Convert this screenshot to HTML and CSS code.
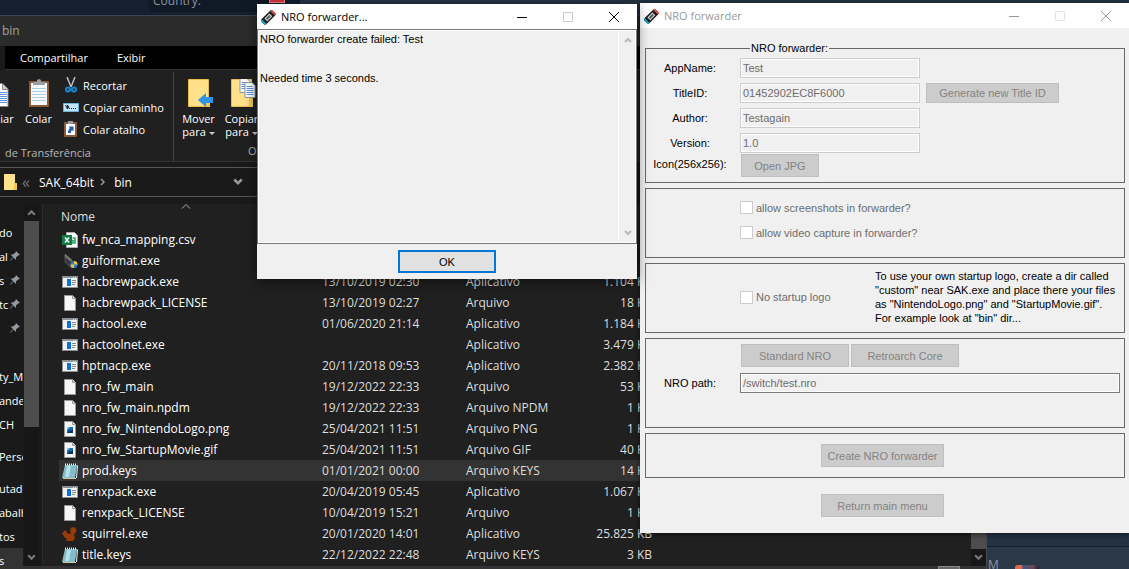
FILE: index.html
```html
<!DOCTYPE html>
<html lang="pt-BR">
<head>
    <meta charset="UTF-8">
    <meta name="viewport" content="width=device-width, initial-scale=1.0">
    <title>NRO forwarder</title>
    <link rel="stylesheet" href="styles.css">
</head>
<body>
    <!-- shared icons -->
    <svg class="sprite" aria-hidden="true">
        <symbol id="exe" viewBox="0 0 16 16">
            <path fill="#8b9197" d="M0 2h16v12H0z"/>
            <path fill="#f2f2f2" d="M1 4h14v9H1z"/>
            <path fill="#d5d9dc" d="M11 3h1v1h-1zM13 3h1v1h-1z"/>
            <path fill="#0d6fd8" d="M5 5h4v7H5z"/>
            <path stroke="#888" d="M10 6.500h4M10 8.500h4M10 10.500h3"/>
        </symbol>
        <symbol id="file" viewBox="0 0 16 16">
            <path fill="#f6f6f6" stroke="#9a9a9a" d="M2.500.5h8l3 3v12h-11z"/>
            <path fill="#ddd" stroke="#9a9a9a" d="M10.500.5v3h3"/>
        </symbol>
        <symbol id="image" viewBox="0 0 16 16">
            <use href="#file"/>
            <path fill="#1a69b5" d="M5 6h6v6H5z"/>
            <path fill="#7cc3f3" d="M5 6h3l-3 3z"/>
            <path fill="#0b315f" d="M5 12l3-3 1 1 2-2v4z"/>
        </symbol>
        <symbol id="keys" viewBox="0 0 16 16">
            <path fill="#e9f1f2" d="M3 15h12l1-12-1-1-1 13z"/>
            <path fill="#82bccb" d="M3 2h12l-2 13H0z"/>
            <path fill="#b6e0e8" d="M5 3h4L7 14H3z"/>
            <path stroke="#e8f4f6" stroke-dasharray="1 1" stroke-width="2" d="M3 1.500h12"/>
            <path stroke="#d8c9a4" d="M1 15.500h13"/>
        </symbol>
        <symbol id="csv" viewBox="0 0 16 16">
            <path fill="#fafafa" stroke="#aaa" d="M4.500.5h8l3 3v12h-11z"/>
            <path fill="none" stroke="#38a169" stroke-width="1.500" d="M10.500 6h2.500v5h-2.500V8.500H13"/>
            <path fill="#107c41" d="M0 3h10v10H0z"/>
            <path stroke="#fff" stroke-width="1.500" d="M3 5.500l4 5M7 5.500l-4 5"/>
        </symbol>
        <symbol id="disk" viewBox="0 0 16 16">
            <path fill="#35383a" stroke="#666" stroke-width=".7" d="M3 1l7 6 1 7-2 1-6-6z"/>
            <path fill="#777" d="M3 1l7 6-1 2-6-5z"/>
            <circle cx="12" cy="11.500" r="3.500" fill="#2b7cd3"/>
            <path fill="#f5c33b" d="M12 8a3.500 3.500 0 0 1 3.500 3.500H12zM12 11.500V15a3.500 3.500 0 0 1-3.500-3.500z"/>
        </symbol>
        <symbol id="squirrel" viewBox="0 0 16 16">
            <path fill="#963b08" d="M0 8l2-3 2-1 1 3 3 1c1 0 1-1 0-3 0-3 2-4 4-4 2 1 3 3 2 5l-2 3 1 3-2 3H4l1-2-2-1-1-2z"/>
        </symbol>
        <symbol id="pin" viewBox="0 0 12 12">
            <path fill="#8f9aa4" d="M7 1l4 4-2 .5-2 2V10L4.500 7.500 1 11l-.3-.3L4 7 1.500 4.500H4l2.500-2z"/>
        </symbol>
        <symbol id="up" viewBox="0 0 8 8">
            <path fill="none" stroke="currentColor" stroke-width="2" d="M1 6l3-3 3 3"/>
        </symbol>
        <symbol id="down" viewBox="0 0 8 8">
            <path fill="none" stroke="currentColor" stroke-width="2" d="M1 2l3 3 3-3"/>
        </symbol>
        <symbol id="app" viewBox="0 0 16 16">
            <g transform="rotate(-45 8 8)">
                <rect x="0" y="5" width="16" height="7" rx="2" fill="#1f1f1f"/>
                <path fill="#19a9c6" d="M2 5v7a2 2 0 0 1-2-2V7a2 2 0 0 1 2-2z"/>
                <path fill="#f0524c" d="M14 5v7a2 2 0 0 0 2-2V7a2 2 0 0 0-2-2z"/>
                <rect x="5" y="7" width="6" height="3" fill="#555" stroke="#ddd"/>
            </g>
        </symbol>
        <symbol id="min" viewBox="0 0 12 12"><path stroke="currentColor" d="M1 6.500h10"/></symbol>
        <symbol id="max" viewBox="0 0 12 12"><path fill="none" stroke="currentColor" d="M1.500 1.500h9v9h-9z"/></symbol>
        <symbol id="close" viewBox="0 0 12 12"><path stroke="currentColor" d="M1 1l10 10M11 1L1 11"/></symbol>
        <symbol id="folder" viewBox="0 0 28 28">
            <path fill="#ffe18b" stroke="#e9bd4d" d="M3.500.5h20v27h-20z"/>
            <path fill="#f2c651" d="M21 18h4v10h-4z"/>
        </symbol>
        <symbol id="sheets" viewBox="0 0 16 20">
            <path fill="#f7f7f7" stroke="#999" d="M.5.500h7l3 3v11H.5z"/>
            <path stroke="#5c93e0" d="M2 4.500h5M2 6.500h5M2 8.500h5M2 10.500h5"/>
            <path fill="#fff" stroke="#8c96a0" d="M5.500 4.500h7l3 3v12h-10z"/>
            <path stroke="#5c93e0" d="M7 8.500h6M7 10.500h7M7 12.500h7M7 14.500h7M7 16.500h7"/>
        </symbol>
    </svg>

    <div class="backdrop">
        <div class="country">Country:</div>
        <div class="flag"></div>
        <div class="corner">
            <span>M</span>
            <i class="avatar"></i>
        </div>
    </div>

    <div class="explorer">
        <div class="path-title">bin</div>
        <nav class="tabs">
            <a href="#">Compartilhar</a>
            <a href="#">Exibir</a>
        </nav>

        <div class="ribbon">
            <div class="group clipboard">
                <div class="tools">
                    <button class="big copy">
                        <svg viewBox="0 0 14 28"><path fill="#fff" stroke="#888" d="M-5 4.500H2l6 6v17H-5z"/><path fill="#ccc" stroke="#888" d="M2.500 4.500v6h6"/><path stroke="#5c93e0" d="M0 13.500h7M0 15.500h7M0 17.500h7M0 19.500h7M0 21.500h7M0 23.500h7"/></svg>
                        iar
                    </button>
                    <button class="big paste">
                        <svg viewBox="0 0 20 28"><rect y="2" width="20" height="26" rx="1" fill="#8a5a3a"/><path fill="#f7f9fa" d="M2 4h16v22H2z"/><path stroke="#a9cfe4" d="M3 9.500h14M3 12.500h14M3 15.500h14M3 18.500h14M3 21.500h14"/><path fill="#9a9fa3" d="M4 3h4V1l2-1 2 1v2h4v3H4z"/></svg>
                        Colar
                    </button>
                    <div class="stack">
                        <button class="small"><svg viewBox="0 0 16 16"><path stroke="#b9bec3" stroke-width="1.500" d="M4 0l4 10M12 0L8 10"/><g fill="none" stroke="#1787d6" stroke-width="2"><circle cx="5" cy="12.500" r="2"/><circle cx="11" cy="12.500" r="2"/></g></svg>Recortar</button>
                        <button class="small"><svg viewBox="0 0 16 16"><path fill="#c3e4f8" stroke="#6bb2dd" d="M.5 4.500h15v8H.5z"/><path fill="none" stroke="#123" d="M2.500 6l2 4V6l2 4"/><path fill="#123" d="M8 9h1v1H8zM10 9h1v1h-1zM12 9h1v1h-1z"/></svg>Copiar caminho</button>
                        <button class="small"><svg viewBox="0 0 16 16"><rect x="1" y="1" width="13" height="15" rx="1" fill="#8a5a3a"/><path fill="#fff" d="M3 3h9v11H3z"/><path fill="#999" d="M5 0h5v3H5z"/><path fill="#235da8" d="M5 12c0-3 1-4 2-5L5.500 5.500h5v5L9 9c-1 1-1 2-1 3z"/></svg>Colar atalho</button>
                    </div>
                </div>
                <div class="caption">de Transferência</div>
            </div>
            <div class="group organize">
                <div class="tools">
                    <button class="big">
                        <svg viewBox="0 0 28 28"><use href="#folder"/><path fill="#2f93e6" d="M13 21l8-7v4h7v6h-7v4z"/></svg>
                        Mover<span>para <b class="caret"></b></span>
                    </button>
                    <button class="big">
                        <svg viewBox="0 0 28 28"><use href="#folder"/><use href="#sheets" x="11" y="-1" width="17" height="20"/></svg>
                        Copiar<span>para <b class="caret"></b></span>
                    </button>
                </div>
                <div class="caption">Organizar</div>
            </div>
        </div>

        <div class="address">
            <svg class="dir" viewBox="0 0 14 16"><path fill="#ffe18b" d="M0 0h11v16H0z"/><path fill="#f2c651" d="M10 9h3v7h-3z"/></svg>
            <span class="older">«</span>
            <span>SAK_64bit</span>
            <svg class="sep" viewBox="0 0 8 8"><path fill="none" stroke="#999" stroke-width="1.500" d="M2 1l3 3-3 3"/></svg>
            <span>bin</span>
            <svg class="drop" viewBox="0 0 8 8"><use href="#down"/></svg>
        </div>

        <div class="content">
            <ul class="sidebar">
                <li>do</li>
                <li>al<svg><use href="#pin"/></svg></li>
                <li>s<svg><use href="#pin"/></svg></li>
                <li>tc<svg><use href="#pin"/></svg></li>
                <li><svg><use href="#pin"/></svg></li>
                <li></li>
                <li>ty_M</li>
                <li>ande</li>
                <li>CH</li>
                <li class="space">Perso</li>
                <li class="space">utado</li>
                <li>abalh</li>
                <li>tos</li>
                <li class="active">s</li>
            </ul>
            <div class="scroll side-scroll">
                <svg><use href="#up"/></svg>
                <div class="thumb"></div>
                <svg><use href="#down"/></svg>
            </div>
            <div class="files">
                <svg class="sort" viewBox="0 0 10 5"><path fill="none" stroke="#aaa" d="M1 4.500l4-4 4 4"/></svg>
                <table>
                    <thead>
                        <tr><th class="name">Nome</th><th class="date"></th><th class="type"></th><th class="size"></th></tr>
                    </thead>
                    <tbody>
                        <tr><td><svg><use href="#csv"/></svg>fw_nca_mapping.csv</td><td></td><td></td><td></td></tr>
                        <tr><td><svg><use href="#disk"/></svg>guiformat.exe</td><td></td><td></td><td></td></tr>
                        <tr><td><svg><use href="#exe"/></svg>hacbrewpack.exe</td><td>13/10/2019 02:30</td><td>Aplicativo</td><td>1.104 KB</td></tr>
                        <tr><td><svg><use href="#file"/></svg>hacbrewpack_LICENSE</td><td>13/10/2019 02:27</td><td>Arquivo</td><td>18 KB</td></tr>
                        <tr><td><svg><use href="#exe"/></svg>hactool.exe</td><td>01/06/2020 21:14</td><td>Aplicativo</td><td>1.184 KB</td></tr>
                        <tr><td><svg><use href="#exe"/></svg>hactoolnet.exe</td><td></td><td>Aplicativo</td><td>3.479 KB</td></tr>
                        <tr><td><svg><use href="#exe"/></svg>hptnacp.exe</td><td>20/11/2018 09:53</td><td>Aplicativo</td><td>2.382 KB</td></tr>
                        <tr><td><svg><use href="#file"/></svg>nro_fw_main</td><td>19/12/2022 22:33</td><td>Arquivo</td><td>53 KB</td></tr>
                        <tr><td><svg><use href="#file"/></svg>nro_fw_main.npdm</td><td>19/12/2022 22:33</td><td>Arquivo NPDM</td><td>1 KB</td></tr>
                        <tr><td><svg><use href="#image"/></svg>nro_fw_NintendoLogo.png</td><td>25/04/2021 11:51</td><td>Arquivo PNG</td><td>1 KB</td></tr>
                        <tr><td><svg><use href="#image"/></svg>nro_fw_StartupMovie.gif</td><td>25/04/2021 11:51</td><td>Arquivo GIF</td><td>40 KB</td></tr>
                        <tr class="selected"><td><svg><use href="#keys"/></svg>prod.keys</td><td>01/01/2021 00:00</td><td>Arquivo KEYS</td><td>14 KB</td></tr>
                        <tr><td><svg><use href="#exe"/></svg>renxpack.exe</td><td>20/04/2019 05:45</td><td>Aplicativo</td><td>1.067 KB</td></tr>
                        <tr><td><svg><use href="#file"/></svg>renxpack_LICENSE</td><td>10/04/2019 15:21</td><td>Arquivo</td><td>1 KB</td></tr>
                        <tr><td><svg><use href="#squirrel"/></svg>squirrel.exe</td><td>20/01/2020 14:01</td><td>Aplicativo</td><td>25.825 KB</td></tr>
                        <tr><td><svg><use href="#keys"/></svg>title.keys</td><td>22/12/2022 22:48</td><td>Arquivo KEYS</td><td>3 KB</td></tr>
                    </tbody>
                </table>
            </div>
            <div class="scroll list-scroll">
                <div class="thumb"></div>
                <svg><use href="#down"/></svg>
            </div>
        </div>
        <div class="status"><i></i></div>
    </div>

    <div class="window forwarder">
        <div class="titlebar inactive">
            <svg class="logo"><use href="#app"/></svg>
            <span>NRO forwarder</span>
            <button aria-label="Minimize"><svg><use href="#min"/></svg></button>
            <button aria-label="Maximize" disabled><svg><use href="#max"/></svg></button>
            <button aria-label="Close"><svg><use href="#close"/></svg></button>
        </div>
        <form class="form">
            <fieldset class="info">
                <legend>NRO forwarder:</legend>
                <div class="row">
                    <label for="appname">AppName:</label>
                    <input type="text" id="appname" value="Test" disabled>
                </div>
                <div class="row">
                    <label for="titleid">TitleID:</label>
                    <input type="text" id="titleid" value="01452902EC8F6000" disabled>
                    <button class="generate" disabled>Generate new Title ID</button>
                </div>
                <div class="row">
                    <label for="author">Author:</label>
                    <input type="text" id="author" value="Testagain" disabled>
                </div>
                <div class="row">
                    <label for="version">Version:</label>
                    <input type="text" id="version" value="1.0" disabled>
                </div>
                <div class="row tight">
                    <label for="icon">Icon(256x256):</label>
                    <button class="jpg" id="icon" disabled>Open JPG</button>
                </div>
            </fieldset>
            <fieldset class="options">
                <label class="check"><input type="checkbox" disabled>allow screenshots in forwarder?</label>
                <label class="check"><input type="checkbox" disabled>allow video capture in forwarder?</label>
            </fieldset>
            <fieldset class="startup">
                <label class="check"><input type="checkbox" disabled>No startup logo</label>
                <p>To use your own startup logo, create a dir called<br>"custom" near SAK.exe and place there your files<br>as "NintendoLogo.png" and "StartupMovie.gif".<br>For example look at "bin" dir...</p>
            </fieldset>
            <fieldset class="paths">
                <div class="kinds">
                    <button disabled>Standard NRO</button>
                    <button disabled>Retroarch Core</button>
                </div>
                <div class="row">
                    <label for="nropath">NRO path:</label>
                    <input type="text" id="nropath" value="/switch/test.nro" readonly>
                </div>
            </fieldset>
            <fieldset class="action">
                <button class="wide" disabled>Create NRO forwarder</button>
            </fieldset>
            <div class="action">
                <button class="wide" disabled>Return main menu</button>
            </div>
        </form>
    </div>

    <div class="window dialog">
        <div class="titlebar">
            <svg class="logo"><use href="#app"/></svg>
            <span>NRO forwarder...</span>
            <button aria-label="Minimize"><svg><use href="#min"/></svg></button>
            <button aria-label="Maximize" disabled><svg><use href="#max"/></svg></button>
            <button aria-label="Close"><svg><use href="#close"/></svg></button>
        </div>
        <div class="log">
            <textarea readonly aria-label="Log">NRO forwarder create failed: Test


Needed time 3 seconds.</textarea>
            <div class="log-scroll">
                <svg><use href="#up"/></svg>
                <svg><use href="#down"/></svg>
            </div>
        </div>
        <div class="buttons">
            <button class="ok">OK</button>
        </div>
    </div>
</body>
</html>
```

FILE: styles.css
```css
* {
    box-sizing: border-box;
}

body {
    margin: 0;
    height: 100vh;
    overflow: hidden;
    position: relative;
    background: #14202f;
    font-family: "Open Sans", "Noto Sans", sans-serif;
    font-size: 12px;
}

button {
    padding: 0;
    border: none;
    background: none;
    font: inherit;
    color: inherit;
}

svg {
    display: block;
    flex: none;
}

.sprite {
    display: none;
}

/* page behind the windows */
.backdrop {
    height: 100%;
    display: flex;
    align-items: flex-start;
    background: linear-gradient(90deg, #14202f 300px, #253243 300px);
}

.country {
    width: 120px;
    height: 12px;
    margin-left: 149px;
    padding-left: 4px;
    line-height: 1px;
    overflow: hidden;
    border-radius: 0 0 3px 3px;
    background: #0f1a26;
    color: #8a949f;
}

.flag {
    width: 16px;
    height: 3px;
    background: #d9343c;
    border: 1px solid #e88;
    border-top: none;
}

.corner {
    width: 142px;
    height: 23px;
    margin-left: auto;
    align-self: flex-end;
    display: flex;
    align-items: flex-end;
    gap: 16px;
    padding-left: 1px;
    overflow: hidden;
    line-height: 9px;
    border-top: 1px solid #141f2b;
    background: #2b3848;
    color: #8a949f;
}

.avatar {
    width: 24px;
    height: 4px;
    border-radius: 8px 12px 0 0;
    background: linear-gradient(90deg, #e06a50 25%, #3a5a86 35%, #6a4558 75%, #201d28);
}

/* explorer */
.explorer {
    position: absolute;
    top: 15px;
    left: 0;
    right: 142px;
    bottom: 0;
    display: flex;
    flex-direction: column;
    background: #1a1a1a;
    border-top: 1px solid #3a444e;
    border-right: 1px solid #4a4a4a;
    color: #fff;
}

.path-title {
    height: 30px;
    line-height: 30px;
    padding-left: 2px;
    background: #2b2b2b;
    color: #a0a0a0;
}

.tabs {
    display: flex;
    height: 24px;
    line-height: 23px;
    gap: 29px;
    margin-left: 5px;
    padding-left: 15px;
    background: #000;
    border-bottom: 1px solid #333;
    font-size: 11px;
}

.tabs a {
    color: #fff;
    text-decoration: none;
}

.ribbon {
    display: flex;
    height: 92px;
    background: #202020;
    border-bottom: 1px solid #333;
    font-size: 11px;
}

.group {
    display: flex;
    flex-direction: column;
    justify-content: space-between;
    margin: 2px 0 0;
    padding-top: 6px;
}

.clipboard {
    width: 174px;
    border-right: 1px solid #454545;
}

.organize {
    width: 160px;
}

.tools {
    display: flex;
}

.big {
    display: flex;
    flex-direction: column;
    align-items: center;
    width: 43px;
    line-height: 13px;
}

.big svg {
    width: 28px;
    height: 28px;
    margin: 1px 0 5px;
}

.organize .tools {
    padding-left: 3px;
}

.copy {
    width: 14px;
}

.big.copy svg {
    width: 14px;
}

.paste {
    width: 49px;
}

.stack {
    display: flex;
    flex-direction: column;
}

.small {
    display: flex;
    align-items: center;
    gap: 4px;
    height: 22px;
    margin-top: -4px;
    margin-bottom: 4px;
    white-space: nowrap;
}

.small svg {
    width: 16px;
    height: 16px;
}

.caret {
    display: inline-block;
    border: 3px solid transparent;
    border-top-color: #ccc;
    border-bottom: none;
    vertical-align: middle;
}

.caption {
    height: 19px;
    line-height: 17px;
    padding-left: 5px;
    color: #b8b8b8;
}

.organize .caption {
    padding-left: 74px;
}

.address {
    display: flex;
    align-items: center;
    width: 257px;
    height: 30px;
    margin-top: 5px;
    padding-left: 4px;
    border-top: 1px solid #555;
    border-bottom: 1px solid #555;
}

.dir {
    width: 14px;
    height: 16px;
}

.older {
    width: 21px;
    padding-left: 4px;
    color: #777;
    font-size: 16px;
    line-height: 16px;
}

.sep {
    width: 8px;
    height: 8px;
    margin: 0 7px 0 5px;
}

.drop {
    width: 10px;
    height: 10px;
    margin-left: auto;
    margin-right: 14px;
    color: #999;
}

.content {
    flex: 1;
    display: flex;
    min-height: 0;
    padding-top: 7px;
}

.sidebar {
    width: 24px;
    margin: 0;
    padding: 16px 0 0;
    list-style: none;
    overflow: hidden;
}

.sidebar li {
    display: flex;
    align-items: center;
    width: 23px;
    height: 24px;
    overflow: hidden;
    font-size: 11px;
    text-indent: -1px;
}

.sidebar li.space {
    margin-top: 8px;
}

.sidebar li.active {
    background: #333;
}

.sidebar svg {
    width: 12px;
    height: 12px;
    margin-left: auto;
    margin-right: 2px;
}

.scroll {
    width: 15px;
    display: flex;
    flex-direction: column;
    align-items: center;
    background: #171717;
    color: #777;
}

.scroll svg {
    width: 9px;
    height: 9px;
    margin: 4px 0;
}

.side-scroll .thumb {
    width: 15px;
    height: 206px;
    margin-bottom: auto;
    background: #4d4d4d;
}

.list-scroll .thumb {
    width: 15px;
    flex: 1;
    background: #4d4d4d;
}

.files {
    position: relative;
    flex: 1;
    margin-left: 3px;
    padding-left: 16px;
    border-left: 1px solid #2b2b2b;
    background: #202020;
    overflow: hidden;
}

.sort {
    position: absolute;
    left: 138px;
    top: 0;
    width: 10px;
    height: 5px;
}

table {
    width: 593px;
    table-layout: fixed;
    border-collapse: collapse;
    color: #dedede;
}

th {
    height: 25px;
    padding: 0 0 0 2px;
    text-align: left;
    font-weight: normal;
}

.name {
    width: 263px;
}

.date {
    width: 144px;
}

.type {
    width: 86px;
}

.size {
    width: 100px;
}

td {
    height: 21px;
    padding: 0;
    white-space: nowrap;
}

td:first-child {
    display: flex;
    align-items: center;
    gap: 4px;
    padding-left: 3px;
    color: #fff;
}

td:last-child {
    text-align: right;
}

td svg {
    width: 16px;
    height: 16px;
}

.selected {
    background: #333;
}

.status {
    height: 3px;
    padding-right: 26px;
    background: #333;
}

.status i {
    display: block;
    width: 22px;
    height: 3px;
    margin-left: auto;
    border: 1px solid #888;
    border-bottom: none;
    background: #666;
}

/* light windows */
.window {
    position: absolute;
    background: #f0f0f0;
    color: #000;
    font-family: "Liberation Sans", Arial, sans-serif;
    font-size: 11px;
}

.forwarder {
    top: 3px;
    left: 640px;
    right: 0;
    box-shadow: 0 1px 6px rgba(0, 0, 0, 0.6);
}

.dialog {
    top: 4px;
    left: 257px;
    width: 380px;
    box-shadow: 0 3px 12px rgba(0, 0, 0, 0.5);
}

.titlebar {
    display: flex;
    align-items: center;
    height: 25px;
    padding-left: 3px;
    background: #fff;
    font-family: "Open Sans", "Noto Sans", sans-serif;
}

.titlebar span {
    flex: 1;
    margin-left: 5px;
}

.titlebar button {
    display: flex;
    justify-content: center;
    width: 46px;
}

.titlebar button svg {
    width: 12px;
    height: 12px;
}

.titlebar button:disabled {
    color: #ccc;
}

.titlebar .logo {
    width: 16px;
    height: 16px;
}

.titlebar.inactive {
    color: #999;
}

.inactive button:disabled {
    color: #e5e5e5;
}

.form {
    display: flex;
    flex-direction: column;
    gap: 5px;
    padding: 12px 4px 16px 5px;
}

fieldset {
    margin: 0;
    padding: 5px 4px;
    min-width: 0;
    border: 1px solid #696969;
}

legend {
    height: 16px;
    line-height: 16px;
    margin-left: 100px;
    padding: 0 1px;
}

.info {
    height: 143px;
    padding-top: 2px;
}

.row {
    display: flex;
}

.row + .row {
    margin-top: 5px;
}

.row + .row.tight {
    margin-top: 1px;
}

.row label {
    width: 80px;
    margin-right: 10px;
    line-height: 20px;
    text-align: center;
}

.row input {
    width: 180px;
    height: 20px;
    padding: 0 2px;
    border: 1px solid #ccc;
    outline: 1px solid #fff;
    outline-offset: -2px;
    background: #f0f0f0;
    color: #6d6d6d;
    font-family: inherit;
    font-size: 11px;
}

.form button {
    height: 23px;
    border: 1px solid #bfbfbf;
    background: #ccc;
    color: #838383;
}

.form .generate {
    width: 133px;
    height: 20px;
    margin-left: 6px;
}

.form .jpg {
    width: 78px;
    margin-left: 1px;
}

.check {
    display: flex;
    align-items: center;
    gap: 3px;
    height: 25px;
    color: #6d6d6d;
}

.check input {
    appearance: none;
    width: 13px;
    height: 13px;
    margin: 0;
    border: 1px solid #ccc;
    background: #fff;
}

.options {
    height: 70px;
    padding: 6px 0 0 94px;
}

.startup {
    display: flex;
    align-items: center;
    height: 70px;
    padding: 5px 0 0 94px;
}

.startup .check {
    width: 135px;
}

.startup p {
    margin: 0;
    line-height: 14px;
    white-space: nowrap;
}

.paths {
    height: 90px;
}

.kinds {
    display: flex;
    gap: 2px;
    margin-left: 91px;
    margin-bottom: 6px;
}

.kinds button {
    width: 108px;
}

.paths .row input {
    flex: 1;
    border-color: #7a7a7a;
}

.action {
    display: flex;
    justify-content: center;
    height: 45px;
    padding: 10px 5px 0 0;
}

div.action {
    height: 34px;
    padding-top: 11px;
}

.form .wide {
    width: 123px;
}

.log {
    display: flex;
    height: 215px;
    border: 1px solid #7a7a7a;
    outline: 1px solid #fff;
    outline-offset: -2px;
}

.log textarea {
    flex: 1;
    padding: 3px 2px;
    border: none;
    outline: none;
    resize: none;
    overflow: hidden;
    background: #f0f0f0;
    font-family: inherit;
    font-size: 11px;
    line-height: 13px;
}

.log-scroll {
    display: flex;
    flex-direction: column;
    justify-content: space-between;
    align-items: center;
    width: 18px;
    padding: 6px 0;
    border-left: 1px solid #fff;
    color: #bbb;
}

.log-scroll svg {
    width: 8px;
    height: 8px;
}

.buttons {
    display: flex;
    justify-content: center;
    padding: 6px 0;
}

.ok {
    width: 98px;
    height: 23px;
    border: 2px solid #0078d7;
    background: #e1e1e1;
}
```
